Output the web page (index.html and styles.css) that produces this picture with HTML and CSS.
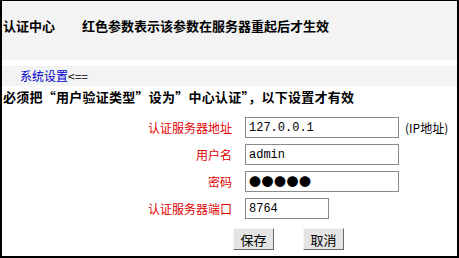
FILE: index.html
```html
<!DOCTYPE html>
<html lang="zh-CN">
<head>
    <meta charset="utf-8">
    <title>认证中心</title>
    <link rel="stylesheet" href="styles.css">
</head>
<body>
    <div class="frame">
        <div class="header">
            <span class="header-title">认证中心</span>
            <span class="header-note">红色参数表示该参数在服务器重起后才生效</span>
        </div>

        <div class="nav">
            <a href="#" class="nav-link">系统设置</a>&lt;==
        </div>

        <p class="notice">必须把“用户验证类型”设为”中心认证”，以下设置才有效</p>

        <form class="form">
            <label class="label" for="serverAddr">认证服务器地址</label>
            <input id="serverAddr" class="input" type="text" value="127.0.0.1">
            <span class="hint">(IP地址)</span>

            <label class="label" for="userName">用户名</label>
            <input id="userName" class="input" type="text" value="admin">
            <span></span>

            <label class="label" for="password">密码</label>
            <input id="password" class="input input-dots" type="text" value="●●●●●">
            <span></span>

            <label class="label" for="serverPort">认证服务器端口</label>
            <input id="serverPort" class="input input-short" type="text" value="8764">
            <span></span>

            <div class="actions">
                <button type="submit" class="button">保存</button>
                <button type="button" class="button">取消</button>
            </div>
        </form>
    </div>
</body>
</html>
```

FILE: styles.css
```css
:root {
    --panel: #f3f3f3;
    --label-red: #e00000;
    --link-blue: #0000cc;
    --input-border: #8a8a8a;
}

* {
    margin: 0;
    padding: 0;
    box-sizing: border-box;
}

body {
    font-family: "Noto Sans CJK SC", "Liberation Sans", sans-serif;
    font-size: 12px;
    color: #000;
    background: #fff;
}

.frame {
    width: 459px;
    height: 258px;
    border: 2px solid #000;
    border-top-width: 1px;
    overflow: hidden;
}

.header {
    height: 59px;
    background-color: var(--panel);
    padding: 17px 0 0 1px;
    display: flex;
    font-size: 13px;
    font-weight: bold;
    line-height: 16px;
}

.header-title {
    width: 79px;
}

.nav {
    margin-top: 6px;
    height: 20px;
    line-height: 20px;
    padding-left: 18px;
    background-color: var(--panel);
}

.nav-link {
    color: var(--link-blue);
    text-decoration: none;
}

.notice {
    margin-top: 3px;
    padding-left: 1px;
    font-size: 13px;
    font-weight: bold;
    line-height: 16px;
    letter-spacing: 0.25px;
}

.form {
    margin-top: 12px;
    display: grid;
    grid-template-columns: 230px 154px auto;
    grid-auto-rows: 21px;
    column-gap: 13px;
    row-gap: 6px;
    align-items: center;
}

.label {
    color: var(--label-red);
    text-align: right;
}

.hint {
    margin-left: -7px;
}

.input {
    height: 21px;
    width: 154px;
    border: 1px solid var(--input-border);
    padding: 0 3px;
    font-family: "Liberation Mono", monospace;
    font-size: 12px;
    color: #000;
    background: #fff;
    outline: none;
}

.input-dots {
    font-family: "Noto Sans CJK SC", sans-serif;
    font-size: 12px;
    letter-spacing: 0.5px;
}

.input-short {
    width: 84px;
}

.actions {
    grid-column: 1 / -1;
    margin-top: 7px;
    padding-left: 231px;
    display: flex;
    gap: 29px;
}

.button {
    width: 41px;
    height: 22px;
    font-family: "Noto Sans CJK SC", sans-serif;
    font-size: 13px;
    background-color: #e4e4e4;
    border: 1px solid;
    border-color: #f4f4f4 #6a6a6a #6a6a6a #f4f4f4;
    cursor: pointer;
}
```
